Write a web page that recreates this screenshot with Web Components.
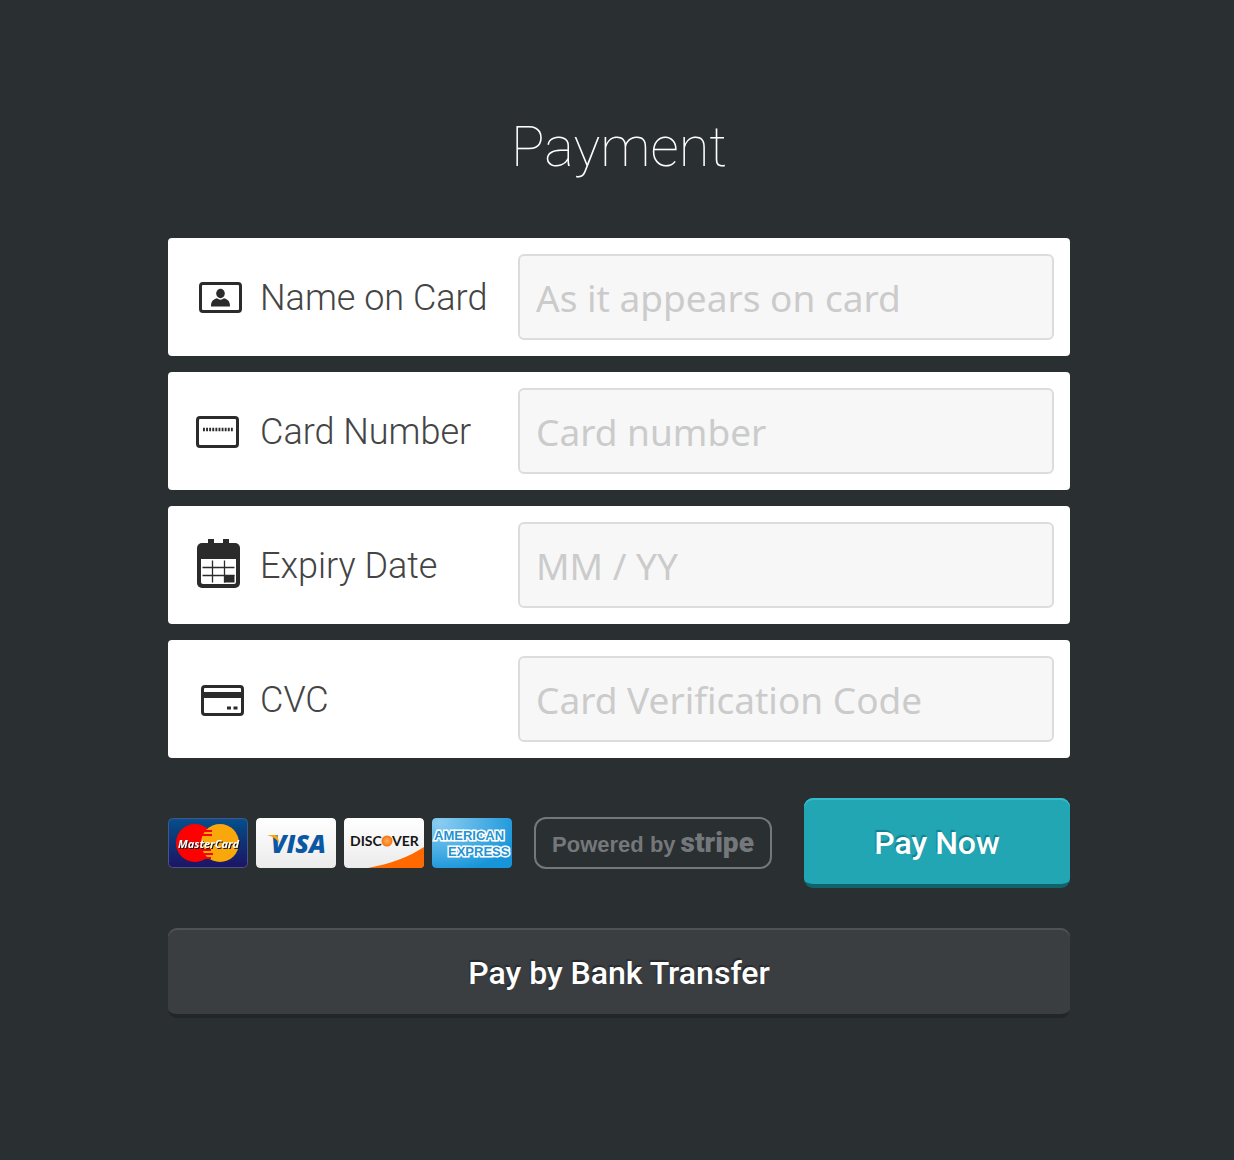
<!DOCTYPE html>
<html lang="en">
<head>
<meta charset="utf-8">
<meta name="viewport" content="width=device-width, initial-scale=1">
<title>Payment</title>
<style>
  body { margin: 0; min-height: 100vh; background: #2a2f31; font-family: Roboto, sans-serif; }
</style>
</head>
<body>
<payment-page>
  <payment-field label="Name on Card" placeholder="As it appears on card" name="name">
    <svg slot="icon" width="48" height="52" viewBox="0 0 48 52" aria-hidden="true">
      <rect x="4.5" y="12.5" width="40" height="28" rx="2.5" fill="none" stroke="#2b2b2b" stroke-width="3"/>
      <ellipse cx="24.5" cy="22.5" rx="4.300" ry="4.700" fill="#2b2b2b"/>
      <path d="M15 35.500c0-4.500 1.500-7 6-8.200 2 1.800 5 1.800 7 0 4.500 1.200 6 3.700 6 8.200z" fill="#2b2b2b"/>
    </svg>
  </payment-field>
  <payment-field label="Card Number" placeholder="Card number" name="number">
    <svg slot="icon" width="48" height="52" viewBox="0 0 48 52" aria-hidden="true">
      <rect x="1.5" y="12.5" width="40" height="29" rx="2.5" fill="none" stroke="#2b2b2b" stroke-width="3"/>
      <path d="M7 24.500h30" stroke="#2b2b2b" stroke-width="3.500" stroke-dasharray="1.900 1.200"/>
    </svg>
  </payment-field>
  <payment-field label="Expiry Date" placeholder="MM / YY" name="expiry">
    <svg slot="icon" width="48" height="52" viewBox="0 0 48 52" aria-hidden="true">
      <path d="M12 0h6v6h-6zM27 0h6v6h-6z" fill="#2b2b2b"/>
      <rect x="1" y="4" width="43" height="45" rx="5" fill="#2b2b2b"/>
      <path d="M5 20h35v23a2 2 0 0 1-2 2H7a2 2 0 0 1-2-2z" fill="#fff"/>
      <path d="M6.500 28.500h32M6.500 36.500h32M16.500 21.500v22M28.500 21.500v22" stroke="#2b2b2b" stroke-width="1.300"/>
      <path d="M28 36h10.500v7.500H28z" fill="#2b2b2b"/>
    </svg>
  </payment-field>
  <payment-field label="CVC" placeholder="Card Verification Code" name="cvc">
    <svg slot="icon" width="48" height="52" viewBox="0 0 48 52" aria-hidden="true">
      <rect x="6.5" y="13.5" width="40" height="28" rx="2.5" fill="none" stroke="#2b2b2b" stroke-width="3"/>
      <path d="M6 19h41v6H6zM31 33.500h4v3h-4zM37.500 33.500h4v3h-4z" fill="#2b2b2b"/>
    </svg>
  </payment-field>
  <card-brands slot="actions"></card-brands>
  <powered-badge slot="actions"></powered-badge>
  <push-button slot="actions" class="pay">Pay Now</push-button>
  <push-button slot="alternative" tone="quiet">Pay by Bank Transfer</push-button>
</payment-page>

<script>
  const build = (host, html) => {
    const template = document.createElement('template');
    template.innerHTML = html;
    host.attachShadow({ mode: 'open' }).append(template.content.cloneNode(true));
    return host.shadowRoot;
  };

  customElements.define('payment-page', class extends HTMLElement {
    constructor() {
      super();
      build(this, `
        <style>
          :host { display: block; padding: 114px 164px 80px 168px; }
          h1 { margin: 0 0 58px; font-size: 56px; line-height: 66px; font-weight: 100; color: #fff; text-align: center; }
          form { display: flex; flex-direction: column; gap: 40px; }
          .fields { display: flex; flex-direction: column; gap: 16px; }
          .actions { display: flex; align-items: center; gap: 22px; }
          ::slotted(.pay) { width: 266px; margin-left: auto; }
        </style>
        <main>
          <h1>Payment</h1>
          <form>
            <div class="fields"><slot></slot></div>
            <div class="actions"><slot name="actions"></slot></div>
            <slot name="alternative"></slot>
          </form>
        </main>`);
    }
  });

  customElements.define('payment-field', class extends HTMLElement {
    constructor() {
      super();
      const root = build(this, `
        <style>
          :host { display: flex; align-items: center; padding: 16px 16px 16px 28px; background: #fff; border-radius: 4px; }
          label { display: flex; align-items: center; gap: 16px; flex: 0 0 322px; font-size: 36px; line-height: 44px; font-weight: 300; color: #444; white-space: nowrap; }
          span { padding-top: 2px; }
          ::slotted(svg) { display: block; flex: none; }
          input { box-sizing: border-box; flex: 1; min-width: 0; height: 86px; margin: 0; padding: 0 16px; border: 2px solid #dcdcdc; border-radius: 6px; background: #f7f7f7; color: #444; font: 37px "Noto Sans", sans-serif; outline: none; }
          input::placeholder { color: #cbcbcb; opacity: 1; }
        </style>
        <label for="field"><slot name="icon"></slot><span></span></label>
        <input id="field" type="text">`);
      this.caption = root.querySelector('span');
      this.input = root.querySelector('input');
    }
    connectedCallback() {
      this.caption.textContent = this.getAttribute('label');
      this.input.placeholder = this.getAttribute('placeholder');
      this.input.name = this.getAttribute('name');
    }
  });

  customElements.define('push-button', class extends HTMLElement {
    constructor() {
      super();
      build(this, `
        <style>
          :host { display: block; --face: #22a6b3; --light: #33bccb; --edge: #0f646c; --shade: #12808a; }
          :host([tone="quiet"]) { --face: #3b3e41; --light: #4e5255; --edge: #232629; --shade: #282b2d; }
          button { display: block; box-sizing: border-box; width: 100%; height: 90px; margin: 0; padding: 4px 16px 0; border: 0; border-bottom: 4px solid var(--edge); border-radius: 9px; background: var(--face); box-shadow: inset 0 2px 0 var(--light); color: #fff; font: 500 32px/40px Roboto, sans-serif; text-shadow: -1px -2px 1px var(--shade); cursor: pointer; }
        </style>
        <button type="button"><slot></slot></button>`);
    }
  });

  customElements.define('powered-badge', class extends HTMLElement {
    constructor() {
      super();
      build(this, `
        <style>
          :host { display: block; }
          a { display: flex; box-sizing: border-box; width: 238px; height: 52px; align-items: baseline; justify-content: center; gap: 5px; border: 2px solid #74787b; border-radius: 12px; color: #74787b; text-decoration: none; font: 700 22px/48px "Liberation Sans", sans-serif; white-space: nowrap; }
          b { font: 900 28px/48px Roboto, sans-serif; }
        </style>
        <a href="#"><span>Powered by</span><b>stripe</b></a>`);
    }
  });

  customElements.define('card-brands', class extends HTMLElement {
    constructor() {
      super();
      build(this, `
        <style>
          :host { display: flex; gap: 8px; }
          svg { display: block; overflow: hidden; border-radius: 4px; }
          .lifted { filter: drop-shadow(1px 1px 0 #151515); }
        </style>
        <svg width="80" height="50" viewBox="0 0 80 50" role="img" aria-label="MasterCard">
          <defs><linearGradient id="navy" x2="0" y2="1"><stop stop-color="#07508f"/><stop offset=".2" stop-color="#06447f"/><stop offset="1" stop-color="#1d1464"/></linearGradient></defs>
          <rect x=".5" y=".5" width="79" height="49" rx="4" fill="url(#navy)" stroke="#4a5388"/>
          <circle cx="27" cy="25" r="19" fill="#f00"/>
          <circle cx="52" cy="25" r="19" fill="#f9a70b"/>
          <path d="M36 13h8M34 17h10M33 32h10M34 36h11M37 40h6" stroke="#f00" stroke-width="2"/>
          <text class="lifted" x="10" y="30" font-family="Open Sans, sans-serif" font-size="11" font-weight="700" font-style="italic" fill="#fff">MasterCard</text>
        </svg>
        <svg width="80" height="50" viewBox="0 0 80 50" role="img" aria-label="Visa">
          <defs><linearGradient id="silver" x2="0" y2="1"><stop stop-color="#fff"/><stop offset="1" stop-color="#ebebeb"/></linearGradient></defs>
          <rect width="80" height="50" rx="4" fill="url(#silver)"/>
          <text x="15" y="35" font-family="Open Sans, sans-serif" font-size="25" font-weight="800" font-style="italic" fill="#0a57a4">VISA</text>
          <path d="M11 17h8c2 0 2.500 1 3 3l1.500 6c-2-4-6-7.500-12.500-9z" fill="#f9a70b"/>
        </svg>
        <svg width="80" height="50" viewBox="0 0 80 50" role="img" aria-label="Discover">
          <defs>
            <linearGradient id="paper" x2="0" y2="1"><stop stop-color="#fff"/><stop offset="1" stop-color="#ebebeb"/></linearGradient>
            <radialGradient id="sun"><stop stop-color="#ffb04d"/><stop offset="1" stop-color="#f47216"/></radialGradient>
          </defs>
          <rect width="80" height="50" rx="4" fill="url(#paper)"/>
          <path d="M24 50C46 46 65 39 80 29v21z" fill="#ff6900"/>
          <text x="6" y="28" font-family="Lato, sans-serif" font-size="14" font-weight="700" fill="#151515">DISC</text>
          <circle cx="43" cy="23" r="5.5" fill="url(#sun)"/>
          <text x="48" y="28" font-family="Lato, sans-serif" font-size="14" font-weight="700" fill="#151515">VER</text>
        </svg>
        <svg width="80" height="50" viewBox="0 0 80 50" role="img" aria-label="American Express">
          <defs><radialGradient id="sky" cx=".1" cy=".1" r="1"><stop stop-color="#8bcdf1"/><stop offset="1" stop-color="#1795da"/></radialGradient></defs>
          <rect width="80" height="50" rx="4" fill="url(#sky)"/>
          <g font-family="Liberation Sans, sans-serif" font-size="13" font-weight="700" fill="#2593d2" stroke="#fff" stroke-width="3" stroke-linejoin="miter" stroke-miterlimit="2" paint-order="stroke">
            <text x="2" y="22">AMERICAN</text>
            <text x="16" y="38">EXPRESS</text>
          </g>
        </svg>`);
    }
  });
</script>
</body>
</html>
